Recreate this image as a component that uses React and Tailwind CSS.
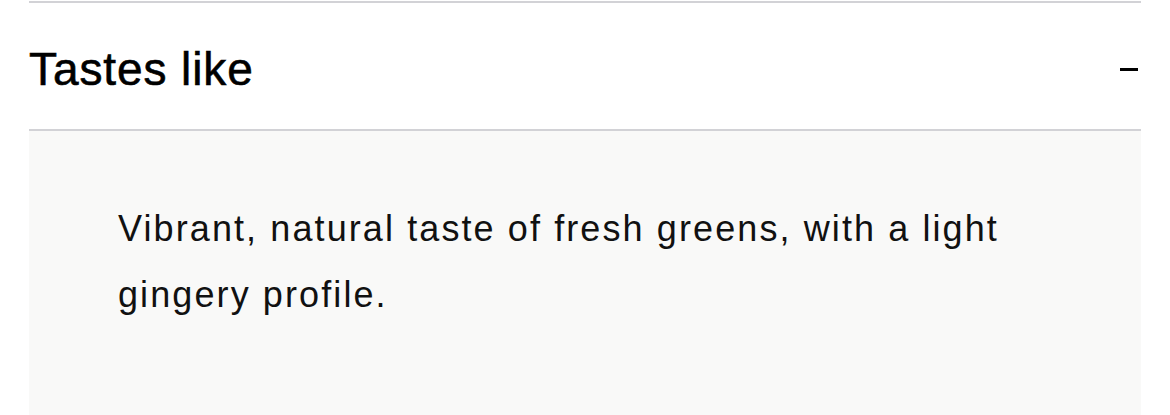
export default function App() {
  return (
    <div className="min-h-[415px] bg-white px-[29px] pt-px font-['Liberation_Sans',Arial,sans-serif] text-[#111]">
      {/* Accordion item */}
      <div className="border-t-2 border-[#d2d2d6]">
        <button className="flex w-full items-start justify-between pt-[43px] pb-[37px] text-left">
          <span className="text-[46px] leading-[46px] tracking-[0.9px] text-black [-webkit-text-stroke:0.6px_black]">
            Tastes like
          </span>
          <span className="mt-[22px] mr-[3px] block h-[3px] w-[18px] bg-black" />
        </button>
        <div className="border-t-2 border-[#d2d2d6] bg-[#f9f9f8] pl-[89px] pr-[73px] pt-[65px] pb-[100px]">
          <p className="text-[36px] leading-[66px] tracking-[2.1px]">
            Vibrant, natural taste of fresh greens, with a light gingery profile.
          </p>
        </div>
      </div>
    </div>
  );
}
